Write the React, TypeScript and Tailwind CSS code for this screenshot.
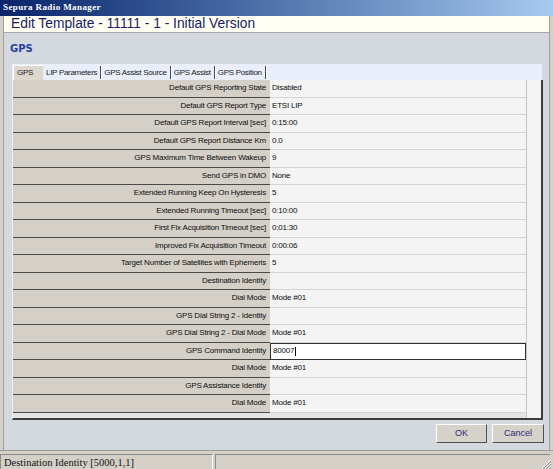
import React from "react";

const rows: [string, string][] = [
  ["Default GPS Reporting State", "Disabled"],
  ["Default GPS Report Type", "ETSI LIP"],
  ["Default GPS Report Interval [sec]", "0:15:00"],
  ["Default GPS Report Distance Km", "0.0"],
  ["GPS Maximum Time Between Wakeup", "9"],
  ["Send GPS in DMO", "None"],
  ["Extended Running Keep On Hysteresis", "5"],
  ["Extended Running Timeout [sec]", "0:10:00"],
  ["First Fix Acquisition Timeout [sec]", "0:01:30"],
  ["Improved Fix Acquisition Timeout", "0:00:06"],
  ["Target Number of Satellites with Ephemeris", "5"],
  ["Destination Identity", ""],
  ["Dial Mode", "Mode #01"],
  ["GPS Dial String 2 - Identity", ""],
  ["GPS Dial String 2 - Dial Mode", "Mode #01"],
  ["GPS Command Identity", "80007"],
  ["Dial Mode", "Mode #01"],
  ["GPS Assistance Identity", ""],
  ["Dial Mode", "Mode #01"],
];

const EDIT_ROW = 15;
const tabs = ["LIP Parameters", "GPS Assist Source", "GPS Assist", "GPS Position"];

function ResizeGrip() {
  return (
    <svg width="11" height="11" viewBox="0 0 11 11" className="absolute right-[2px] bottom-[2px]">
      {[3, 6, 9].map((n) => (
        <g key={n}>
          <line x1={11 - n} y1="11" x2="11" y2={11 - n} stroke="#ffffff" strokeWidth="1" />
          <line x1={12 - n} y1="11" x2="11" y2={12 - n} stroke="#808080" strokeWidth="1" />
        </g>
      ))}
    </svg>
  );
}

export default function App() {
  return (
    <div className="w-[553px] h-[469px] flex flex-col bg-[#d4d0c8] overflow-hidden font-['Liberation_Sans',Arial,sans-serif] text-[#0c0c0c]">
      {/* Title bar */}
      <div className="h-[16px] shrink-0 flex items-center pl-[3px] bg-gradient-to-r from-[#0a246a] to-[#a6caf0] text-white font-bold font-['Liberation_Serif',serif] text-[9px] tracking-[0.4px]">
        Sepura Radio Manager
      </div>

      {/* Window body */}
      <div className="h-[434px] shrink-0 flex pl-[3px] pr-[3px]">
        <div className="flex-1 flex flex-col border-l border-r border-[#a0a0a0]">
          <div className="h-[16px] shrink-0 bg-[#fffef3] pl-[7px] flex items-center text-[13.8px] leading-[16px] text-[#181c66]">
            Edit Template - 11111 - 1 - Initial Version
          </div>
          <div className="h-[1px] shrink-0 bg-[#a8a8a8]" />

          <div className="flex-1 flex flex-col bg-[#d3d9df]">
            <div className="mt-[9px] h-[12px] pl-[6px] flex items-center font-['DejaVu_Sans',sans-serif] font-bold text-[10px] text-[#2640a0]">
              GPS
            </div>

            {/* Tabs */}
            <div className="mt-[10px] ml-[8px] w-[530px] h-[16px] flex items-end bg-[#e9eefa] text-[8px] tracking-[-0.3px] text-[#1a1a1a]">
              <div className="ml-[1px] w-[30px] h-[15px] pl-[3px] flex items-center bg-[#dcd8d0] border-t border-l border-white">
                GPS
              </div>
              {tabs.map((t) => (
                <div key={t} className="h-[13px] mb-[1px] px-[3px] flex items-center border-r border-[#4a4a4a] shadow-[1px_0_0_#ffffff]">
                  {t}
                </div>
              ))}
            </div>

            {/* Property grid */}
            <div className="ml-[8px] w-[531px] h-[340px] flex flex-col bg-[#e6e6e6] border-l border-l-[#f0f0f0] border-r-2 border-b-2 border-r-[#3c3c3c] border-b-[#3c3c3c] text-[8px] tracking-[-0.2px]">
              {rows.map(([label, value], i) => (
                <div key={i} className="h-[17.5px] shrink-0 flex">
                  <div className="w-[257px] pr-[4px] flex items-center justify-end bg-[#d4d0c8] border-b border-[#4a4a4a]">
                    {label}
                  </div>
                  {i === EDIT_ROW ? (
                    <div className="w-[256px] pl-[2px] flex items-center bg-white border border-[#303030]">
                      {value}
                      <span className="ml-[1px] w-[1px] h-[9px] bg-black" />
                    </div>
                  ) : (
                    <div className="w-[256px] pl-[2px] flex items-center bg-[#f4f4f4] border-b border-[#d4d4d4]">
                      {value}
                    </div>
                  )}
                  <div className="flex-1 bg-[#f3f3f3] border-l border-[#c4c4c4]" />
                </div>
              ))}
              <div className="flex-1 flex">
                <div className="w-[513px] bg-[#e4e4e4]" />
                <div className="flex-1 bg-[#f3f3f3] border-l border-[#c4c4c4]" />
              </div>
            </div>

            {/* Buttons */}
            <div className="mt-[4px] h-[19px] flex justify-end gap-[5px] pr-[5px] text-[9px] text-[#2b2b78]">
              <button className="w-[51px] h-[19px] bg-[#d6d2ca] border border-t-white border-l-white border-r-[#505050] border-b-[#505050]">
                OK
              </button>
              <button className="w-[52px] h-[19px] bg-[#d6d2ca] border border-t-white border-l-white border-r-[#505050] border-b-[#505050]">
                Cancel
              </button>
            </div>
          </div>
        </div>
      </div>

      {/* Status bar */}
      <div className="relative flex-1 flex gap-[2px] pt-[3px] border-t border-[#9c9c9c] font-['Liberation_Serif',serif] text-[10.5px] text-[#111]">
        <div className="w-[213px] pl-[3px] flex items-center border-t border-l border-[#8c8c8c] border-r border-r-white">
          Destination Identity [5000,1,1]
        </div>
        <div className="flex-1 mr-[3px] border-t border-l border-[#8c8c8c]" />
        <ResizeGrip />
      </div>
    </div>
  );
}
